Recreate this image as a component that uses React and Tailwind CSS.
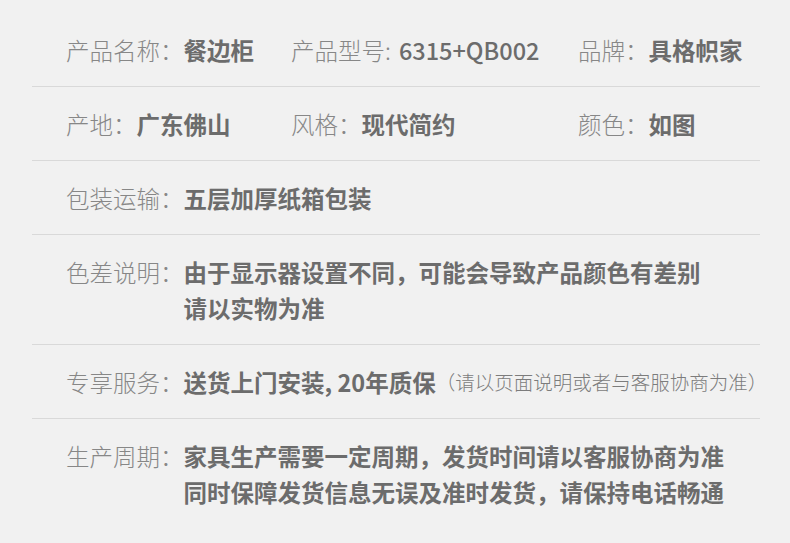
const Label = ({ children }) => (
  <span className="shrink-0 whitespace-nowrap font-light text-[#878787]">{children}</span>
);

const Value = ({ children, className = "" }) => (
  <span className={`shrink-0 whitespace-nowrap font-bold text-[#6c6c6c] ${className}`}>
    {children}
  </span>
);

const Row = ({ children, last }) => (
  <div
    className={`flex items-start pl-[34px] pt-[19px] pb-[18px] ${
      last ? "" : "border-b border-[#d9d9d9]"
    }`}
  >
    {children}
  </div>
);

const App = () => {
  return (
    <div
      className="w-[790px] h-[543px] bg-[#f1f1f1] overflow-hidden pt-[13px]"
      style={{ fontFamily: '"Noto Sans CJK SC", "Noto Sans", sans-serif' }}
    >
      <div className="ml-[32px] w-[728px] text-[23.5px] leading-[36px]">
        <Row>
          <div className="w-[225px] flex">
            <Label>产品名称：</Label>
            <Value>餐边柜</Value>
          </div>
          <div className="w-[287px] flex">
            <Label>产品型号:</Label>
            <span className="ml-[8px] font-medium text-[#6c6c6c]">6315+QB002</span>
          </div>
          <div className="flex">
            <Label>品牌：</Label>
            <Value>具格帜家</Value>
          </div>
        </Row>

        <Row>
          <div className="w-[225px] flex">
            <Label>产地：</Label>
            <Value>广东佛山</Value>
          </div>
          <div className="w-[287px] flex">
            <Label>风格：</Label>
            <Value>现代简约</Value>
          </div>
          <div className="flex">
            <Label>颜色：</Label>
            <Value>如图</Value>
          </div>
        </Row>

        <Row>
          <Label>包装运输：</Label>
          <Value>五层加厚纸箱包装</Value>
        </Row>

        <Row>
          <Label>色差说明：</Label>
          <Value className="flex flex-col">
            <span>由于显示器设置不同，可能会导致产品颜色有差别</span>
            <span>请以实物为准</span>
          </Value>
        </Row>

        <Row>
          <Label>专享服务：</Label>
          <Value>送货上门安装, 20年质保</Value>
          <span className="shrink-0 whitespace-nowrap text-[19.5px] font-light text-[#7c7c7c]">
            （请以页面说明或者与客服协商为准）
          </span>
        </Row>

        <Row last>
          <Label>生产周期：</Label>
          <Value className="flex flex-col">
            <span>家具生产需要一定周期，发货时间请以客服协商为准</span>
            <span>同时保障发货信息无误及准时发货，请保持电话畅通</span>
          </Value>
        </Row>
      </div>
    </div>
  );
};

export default App;
